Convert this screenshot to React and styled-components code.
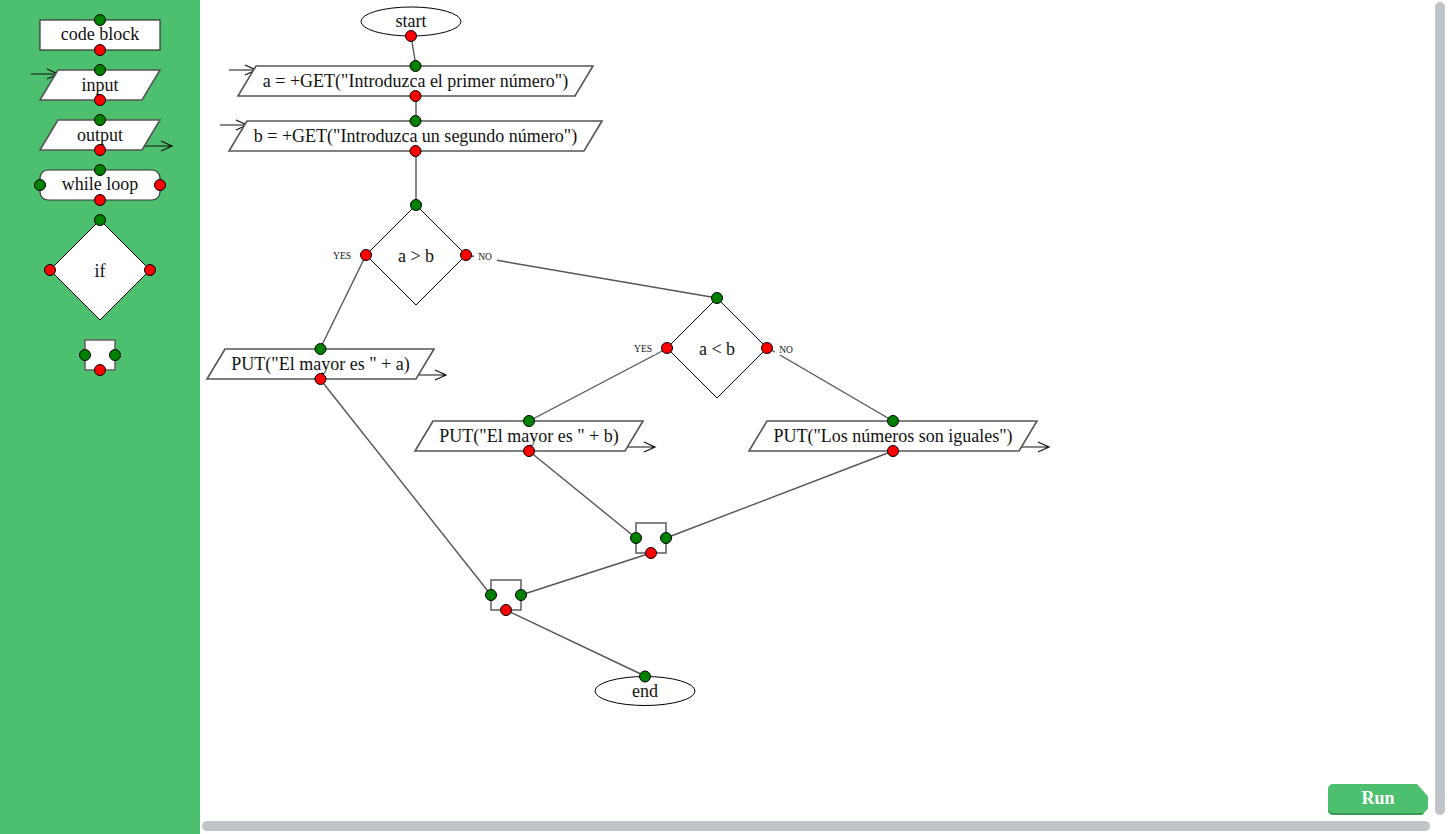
import React from 'react';
import styled, { createGlobalStyle } from 'styled-components';

const Global = createGlobalStyle`
  html, body { margin: 0; padding: 0; overflow: hidden; }
  body { font-family: "Liberation Serif", "Times New Roman", serif; background: #fff; }
`;

const Page = styled.div`
  display: flex;
  width: 1448px;
  height: 834px;
`;

const Sidebar = styled.aside`
  flex: none;
  width: 200px;
  background: #4cc06e;
`;

const Palette = styled.div`
  display: flex;
  flex-direction: column;
  gap: 8px;
  padding-top: 14px;
`;

const PaletteItem = styled.svg`
  display: block;
  width: 200px;
  overflow: visible;
`;

const Workspace = styled.main`
  flex: 1;
  min-width: 0;
  display: flex;
  flex-direction: column;
`;

const WorkRow = styled.div`
  flex: 1;
  min-height: 0;
  display: flex;
`;

const Canvas = styled.div`
  position: relative;
  flex: 1;
  overflow: hidden;
  background: #fff;
`;

const Diagram = styled.svg`
  display: block;
  width: 1234px;
  height: 820px;
`;

const VTrack = styled.div`
  flex: none;
  width: 14px;
  display: flex;
`;

const VThumb = styled.div`
  width: 10px;
  margin: 2px 3px 5px 1px;
  border-radius: 5px;
  background: #c1c5c7;
`;

const HTrack = styled.div`
  flex: none;
  height: 14px;
  display: flex;
`;

const HThumb = styled.div`
  flex: 1;
  height: 10px;
  margin: 1px 18px 3px 2px;
  border-radius: 5px;
  background: #c1c5c7;
`;

const RunButton = styled.button`
  position: absolute;
  right: 6px;
  bottom: 5px;
  width: 100px;
  height: 31px;
  border: none;
  padding: 0 0 3px 0;
  border-radius: 5px 0 0 5px;
  background: #4cc06e;
  box-shadow: inset 0 -2px 0 #3a9a57;
  color: #fff;
  font-family: "Liberation Serif", "Times New Roman", serif;
  font-weight: bold;
  font-size: 18px;
  cursor: pointer;
  clip-path: polygon(0 0, 89% 0, 100% 40%, 100% 80%, 94% 100%, 0 100%);
`;

/* ---------- SVG parts ---------- */

const Edge = styled.line`
  stroke: #555;
  stroke-width: 1.4;
`;

const Outline = styled.path`
  fill: #fff;
  stroke: ${(p) => p.$tone || '#000'};
  stroke-width: ${(p) => p.$w || 1};
`;

const OvalShape = styled.ellipse`
  fill: #fff;
  stroke: #000;
  stroke-width: 1;
`;

const BoxShape = styled.rect`
  fill: #fff;
  stroke: ${(p) => p.$tone || '#333'};
  stroke-width: ${(p) => p.$w || 1.2};
`;

const Label = styled.text`
  font-family: "Liberation Serif", "Times New Roman", serif;
  font-size: ${(p) => p.$size || 18}px;
  fill: #111;
  text-anchor: middle;
  dominant-baseline: central;
`;

const BranchMask = styled.rect`
  fill: #fff;
`;

const PortDot = styled.circle`
  fill: ${(p) => (p.$kind === 'in' ? '#008000' : '#ff0000')};
  stroke: #000;
  stroke-width: 1;
`;

const ArrowPath = styled.path`
  fill: none;
  stroke: #111;
  stroke-width: 1.2;
`;

const Port = ({ x, y, kind }) => <PortDot cx={x} cy={y} r={5.5} $kind={kind} />;

const Arrow = ({ x1, x2, y }) => (
  <ArrowPath d={`M${x1} ${y}H${x2}M${x2 - 11} ${y - 5}L${x2} ${y}L${x2 - 11} ${y + 5}`} />
);

const IOBlock = ({ y, left, right, skew = 18, text, kind, size }) => {
  const cx = (left + right) / 2 - skew / 2;
  const d = `M${left} ${y}L${right} ${y}L${right - skew} ${y + 30}L${left - skew} ${y + 30}Z`;
  return (
    <g>
      {kind === 'input' && <Arrow x1={left - 27} x2={left} y={y + 4} />}
      {kind === 'output' && <Arrow x1={right - skew - 3} x2={right - skew + 30} y={y + 26} />}
      <Outline d={d} $tone="#555" $w={1.6} />
      <Label x={cx} y={y + 14.5} $size={size}>{text}</Label>
      <Port x={cx} y={y} kind="in" />
      <Port x={cx} y={y + 30} kind="out" />
    </g>
  );
};

const Decision = ({ cx, cy, text, labels }) => (
  <g>
    {labels && (
      <>
        <BranchMask x={cx - 84} y={cy - 7} width={22} height={14} />
        <BranchMask x={cx + 58} y={cy - 7} width={23} height={14} />
        <Label x={cx - 74} y={cy + 0.5} $size={9.5}>YES</Label>
        <Label x={cx + 69} y={cy + 1.5} $size={9.5}>NO</Label>
      </>
    )}
    <Outline d={`M${cx} ${cy - 50}L${cx + 50} ${cy}L${cx} ${cy + 50}L${cx - 50} ${cy}Z`} />
    <Label x={cx} y={cy + 1}>{text}</Label>
    <Port x={cx} y={cy - 50} kind="in" />
    <Port x={cx - 50} y={cy} kind="out" />
    <Port x={cx + 50} y={cy} kind="out" />
  </g>
);

const Merge = ({ x, y }) => (
  <g>
    <BoxShape x={x} y={y} width={30} height={30} $tone="#666" $w={1.6} />
    <Port x={x} y={y + 15} kind="in" />
    <Port x={x + 30} y={y + 15} kind="in" />
    <Port x={x + 15} y={y + 30} kind="out" />
  </g>
);

const Terminal = ({ cx, cy, text, port }) => (
  <g>
    <OvalShape cx={cx} cy={cy} rx={50} ry={14.5} />
    <Label x={cx} y={cy - 0.5}>{text}</Label>
    <Port x={cx} y={port === 'in' ? cy - 14.5 : cy + 14.5} kind={port} />
  </g>
);

const edges = [
  [411, 36, 416, 66],
  [416, 96, 416, 121],
  [416, 151, 416, 205],
  [366, 255, 320, 349],
  [466, 255, 717, 298],
  [668, 348, 529, 421],
  [768, 348, 893, 421],
  [320, 379, 491, 595],
  [529, 451, 636, 538],
  [893, 451, 666, 538],
  [651, 553, 521, 595],
  [506, 610, 645, 676],
];

/* ---------- palette ---------- */

const PaletteBlock = () => (
  <PaletteItem viewBox="0 -6 200 42" height="42">
    <BoxShape x={40} y={0} width={120} height={30} />
    <Label x={100} y={14}>code block</Label>
    <Port x={100} y={0} kind="in" />
    <Port x={100} y={30} kind="out" />
  </PaletteItem>
);

const PaletteIO = ({ kind, text }) => (
  <PaletteItem viewBox="0 -6 200 42" height="42">
    <IOBlock y={0} left={58} right={160} text={text} kind={kind} />
  </PaletteItem>
);

const PaletteLoop = () => (
  <PaletteItem viewBox="0 -6 200 42" height="42">
    <BoxShape x={40} y={0} width={120} height={30} rx={8} />
    <Label x={100} y={14}>while loop</Label>
    <Port x={100} y={0} kind="in" />
    <Port x={100} y={30} kind="out" />
    <Port x={40} y={15} kind="in" />
    <Port x={160} y={15} kind="out" />
  </PaletteItem>
);

const PaletteIf = () => (
  <PaletteItem viewBox="0 -6 200 112" height="112">
    <Decision cx={100} cy={50} text="if" />
  </PaletteItem>
);

const PaletteMerge = () => (
  <PaletteItem viewBox="0 -6 200 42" height="42">
    <Merge x={85} y={0} />
  </PaletteItem>
);

export default function App() {
  return (
    <>
      <Global />
      <Page>
        <Sidebar>
          <Palette>
            <PaletteBlock />
            <PaletteIO kind="input" text="input" />
            <PaletteIO kind="output" text="output" />
            <PaletteLoop />
            <PaletteIf />
            <PaletteMerge />
          </Palette>
        </Sidebar>
        <Workspace>
          <WorkRow>
            <Canvas>
              <Diagram viewBox="200 0 1234 820">
                {edges.map(([x1, y1, x2, y2], i) => (
                  <Edge key={i} x1={x1} y1={y1} x2={x2} y2={y2} />
                ))}
                <Terminal cx={411} cy={21.5} text="start" port="out" />
                <IOBlock y={66} left={256} right={593} kind="input" text={'a = +GET("Introduzca el primer número")'} />
                <IOBlock y={121} left={247} right={602} kind="input" text={'b = +GET("Introduzca un segundo número")'} />
                <Decision cx={416} cy={255} text="a > b" labels />
                <Decision cx={717} cy={348} text="a < b" labels />
                <IOBlock y={349} left={225} right={434} kind="output" text={'PUT("El mayor es " + a)'} />
                <IOBlock y={421} left={433} right={643} kind="output" text={'PUT("El mayor es " + b)'} />
                <IOBlock y={421} left={767} right={1037} kind="output" text={'PUT("Los números son iguales")'} />
                <Merge x={636} y={523} />
                <Merge x={491} y={580} />
                <Terminal cx={645} cy={691} text="end" port="in" />
              </Diagram>
              <RunButton type="button">Run</RunButton>
            </Canvas>
            <VTrack>
              <VThumb />
            </VTrack>
          </WorkRow>
          <HTrack>
            <HThumb />
          </HTrack>
        </Workspace>
      </Page>
    </>
  );
}
